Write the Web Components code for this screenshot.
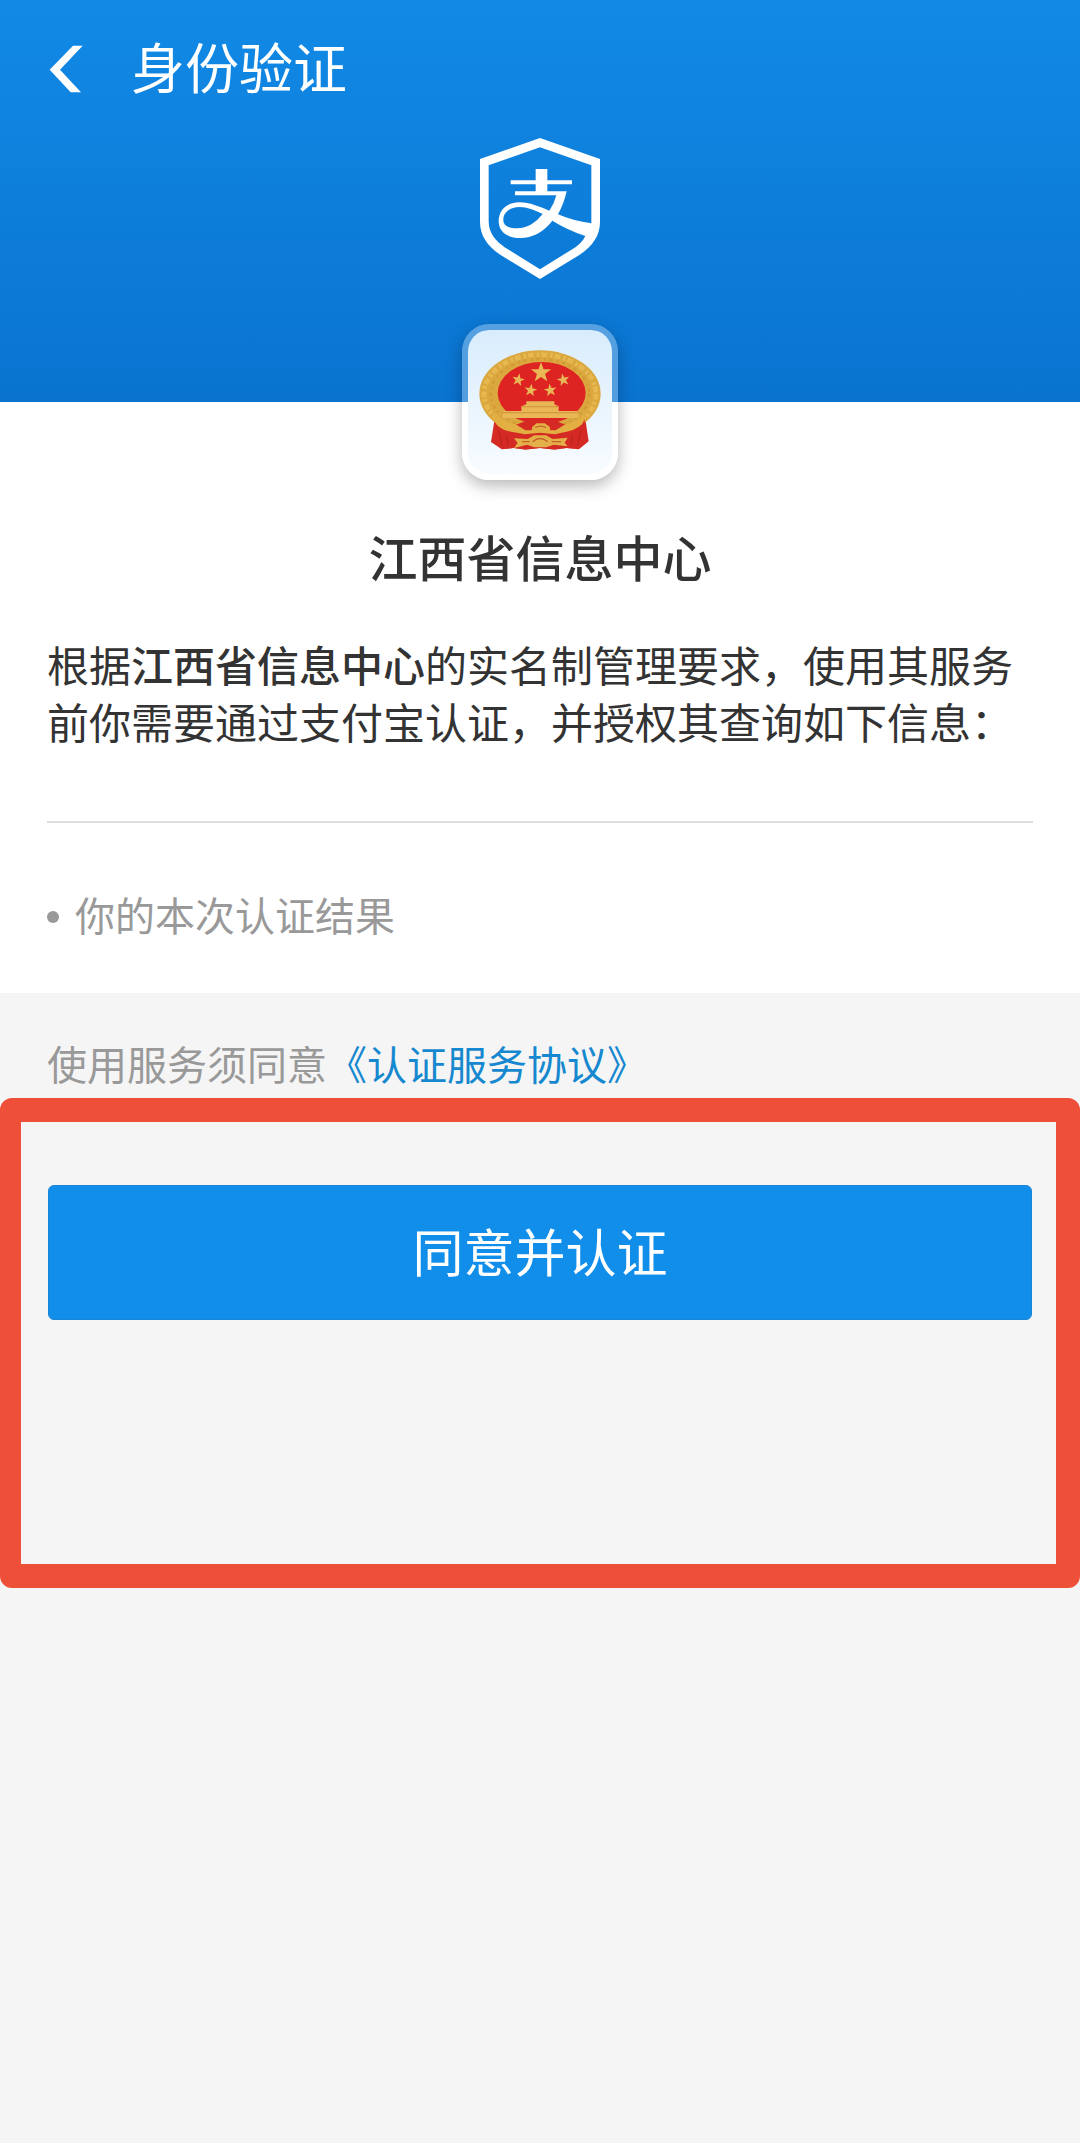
<!DOCTYPE html>
<html lang="zh-CN">
<head>
<meta charset="utf-8">
<meta name="viewport" content="width=device-width, initial-scale=1">
<title>身份验证</title>
<style>
  body {
    margin: 0;
    min-height: 100vh;
    background: #f5f5f5;
    color: #333;
    font-family: "Noto Sans CJK SC", sans-serif;
    text-spacing-trim: space-all;
  }
</style>
</head>
<body>
<verify-page></verify-page>

<template id="verify-page">
  <style>
    :host { display: block; }
    .content { background: #fff; padding: 0 47px 50px; }
  </style>
  <verify-header>身份验证</verify-header>
  <main>
    <div class="content">
      <org-badge>江西省信息中心</org-badge>
      <auth-notice>根据<strong>江西省信息中心</strong>的实名制管理要求，使用其服务前你需要通过支付宝认证，并授权其查询如下信息：</auth-notice>
      <scope-list><li>你的本次认证结果</li></scope-list>
    </div>
    <agreement-line>使用服务须同意<a slot="link" href="#agreement">《认证服务协议》</a></agreement-line>
    <action-frame><primary-button>同意并认证</primary-button></action-frame>
  </main>
</template>

<template id="verify-header">
  <style>
    :host { display: block; background: linear-gradient(#118ae6, #0a73d0); color: #fff; }
    nav { display: flex; align-items: center; gap: 48px; height: 138px; padding: 0 49px; }
    button { display: flex; padding: 0; border: 0; background: none; color: inherit; cursor: pointer; }
    h1 { margin: 0; padding-bottom: 6px; font-size: 54px; line-height: 80px; font-weight: 400; }
    .hero { display: flex; justify-content: center; height: 264px; }
    svg { display: block; }
  </style>
  <nav>
    <button type="button" aria-label="返回">
      <svg width="34" height="48" viewBox="148 136 102 144" fill="currentColor"><path d="M150 210 220 138H249L181 210 244 278H213Z"/></svg>
    </button>
    <h1><slot></slot></h1>
  </nav>
  <div class="hero">
    <svg width="120" height="141" viewBox="90 54 360 423" fill="#fff" aria-hidden="true">
      <path fill-rule="evenodd" d="M270 54 450 117V306C450 344 430 378 388 405L270 477 152 405C110 378 90 344 90 306V117ZM270 82 116 136V304C116 339 137 364 166 383L270 448 374 383C388 374 399 363 406 348Q352 330 307 302C281 336 247 354 211 354C171 354 146 335 146 304C146 268 172 247 208 247C240 247 267 260 298 272Q313 251 319 226H195V214H257V193H182V181H257V147H292V181H366V193H292V214H350Q342 251 324 283Q370 303 424 310V136ZM278 282C253 270 231 261 209 261C178 261 160 278 160 299C160 316 174 325 202 325C232 325 257 308 278 282Z"/>
    </svg>
  </div>
</template>

<template id="org-badge">
  <style>
    :host { display: flex; flex-direction: column; align-items: center; }
    .tile {
      position: relative;
      display: flex; align-items: center; justify-content: center;
      box-sizing: border-box; width: 156px; height: 156px; margin-top: -78px; padding-bottom: 5px;
      border: 6px solid rgba(255,255,255,.3); border-radius: 27px;
      background: linear-gradient(#d9ecfd, #f8fcff) padding-box;
      box-shadow: 0 6px 16px rgba(0,0,0,.28);
    }
    .tile::before {
      content: ""; position: absolute; inset: 72px -6px -6px;
      border: 6px solid #fff; border-top: 0; border-radius: 0 0 27px 27px;
    }
    h2 { margin: 40px 0 0; font-size: 49px; line-height: 72px; font-weight: 500; }
  </style>
  <div class="tile">
    <svg width="122" height="100" viewBox="121 149 366 300" role="img" aria-label="国徽">
      <defs>
        <path id="star" d="M0-10 2.4-3.2 9.5-3.1 3.8 1.2 5.9 8.1 0 4 -5.9 8.1 -3.8 1.2 -9.5-3.1 -2.4-3.2Z"/>
      </defs>
      <path fill="#d52c24" d="M168 355 157 425 190 447 225 443 260 448 304 443 348 448 383 443 420 447 450 423 439 350Z"/>
      <ellipse cx="304" cy="280" rx="182" ry="130" fill="#dba83f"/>
      <ellipse cx="304" cy="280" rx="168" ry="117" fill="none" stroke="#e6b84f" stroke-width="14" stroke-dasharray="17 9 8 6"/>
      <ellipse cx="304" cy="280" rx="148" ry="104" fill="none" stroke="#d39a35" stroke-width="8" stroke-dasharray="11 13 6 9"/>
      <ellipse cx="309" cy="278" rx="132" ry="93" fill="#de2323"/>
      <g fill="#e9b755">
        <use href="#star" transform="translate(307 217) scale(3.2)"/>
        <use href="#star" transform="translate(239 239) rotate(12) scale(2)"/>
        <use href="#star" transform="translate(374 239) rotate(-12) scale(2)"/>
        <use href="#star" transform="translate(276 270) rotate(8) scale(2)"/>
        <use href="#star" transform="translate(335 270) rotate(-8) scale(2)"/>
        <path d="M263 303H347V312L360 318V332H416L420 353H190L194 332H248V318L263 312Z"/>
      </g>
      <path d="M190 337H420M250 319H358" stroke="#d0933a" stroke-width="3"/>
      <path fill="#d52a23" d="M183 358Q207 385 240 370L270 358H341L373 370Q411 388 437 355L447 424 422 445 383 443 346 447 304 443 261 447 225 443 188 445 160 424Z"/>
      <path fill="#e3af43" d="M160 335Q190 362 231 372L260 390 279 390 281 379 294 369H318L333 379 335 390 351 390 380 372Q420 362 448 335L431 371Q407 393 369 397L349 402 304 397 259 402 235 397Q193 393 174 373Z"/>
      <path fill="#e4b04a" d="M226 414 267 416 287 405H322L342 416 387 412 378 427 387 438 345 433 323 441H287L265 433 226 443 237 428Z"/>
      <path d="M282 424Q304 405 327 424M250 424H273M339 424H368M290 382Q305 373 322 382" fill="none" stroke="#c4632a" stroke-width="4"/>
      <path d="M181 392 190 435M203 404 208 435M402 404 397 434M426 392 417 435" stroke="#b5231f" stroke-width="3"/>
    </svg>
  </div>
  <h2><slot></slot></h2>
</template>

<template id="auth-notice">
  <style>
    :host { display: block; margin-top: 43px; padding-bottom: 72px; border-bottom: 2px solid #dedede; }
    p { margin: 0; font-size: 42px; line-height: 57px; }
    ::slotted(strong) { font-weight: 500; }
  </style>
  <p><slot></slot></p>
</template>

<template id="scope-list">
  <style>
    :host { display: block; margin-top: 62px; color: #999; }
    ul { margin: 0; padding: 0; list-style: none; font-size: 40px; line-height: 58px; }
    li { display: flex; align-items: center; gap: 16px; }
    li::before { content: ""; width: 12px; height: 12px; margin-top: 6px; border-radius: 50%; background: #999; }
  </style>
  <ul></ul>
</template>

<template id="agreement-line">
  <style>
    :host { display: block; padding: 41px 47px 6px; color: #999; }
    p { margin: 0; font-size: 40px; line-height: 58px; }
    ::slotted(a) { color: #1688cf; text-decoration: none; }
  </style>
  <p><slot></slot><slot name="link"></slot></p>
</template>

<template id="action-frame">
  <style>
    :host {
      display: block; box-sizing: border-box; min-height: 490px; padding: 63px 24px 0 27px;
      border: 24px solid #ee4f38; border-left-width: 21px; border-radius: 12px;
    }
  </style>
  <slot></slot>
</template>

<template id="primary-button">
  <style>
    :host { display: block; }
    button {
      display: block; width: 100%; height: 135px; padding: 0 0 6px;
      border: 1px solid #1b86d6; border-radius: 6px; background: #108eea;
      color: #fff; font: inherit; font-size: 51px; line-height: 76px; cursor: pointer;
    }
  </style>
  <button type="button"><slot></slot></button>
</template>

<script>
  class TemplateElement extends HTMLElement {
    constructor() {
      super();
      const template = document.getElementById(this.localName);
      this.attachShadow({ mode: "open" }).append(template.content.cloneNode(true));
    }
  }

  class VerifyHeader extends TemplateElement {}
  class OrgBadge extends TemplateElement {}
  class AuthNotice extends TemplateElement {}
  class AgreementLine extends TemplateElement {}
  class ActionFrame extends TemplateElement {}
  class PrimaryButton extends TemplateElement {}
  class VerifyPage extends TemplateElement {}

  // Moves the items it is given into its own list, so that they get its bullets.
  class ScopeList extends TemplateElement {
    connectedCallback() {
      this.shadowRoot.querySelector("ul").append(...this.querySelectorAll("li"));
    }
  }

  customElements.define("verify-header", VerifyHeader);
  customElements.define("org-badge", OrgBadge);
  customElements.define("auth-notice", AuthNotice);
  customElements.define("scope-list", ScopeList);
  customElements.define("agreement-line", AgreementLine);
  customElements.define("action-frame", ActionFrame);
  customElements.define("primary-button", PrimaryButton);
  customElements.define("verify-page", VerifyPage);
</script>
</body>
</html>
